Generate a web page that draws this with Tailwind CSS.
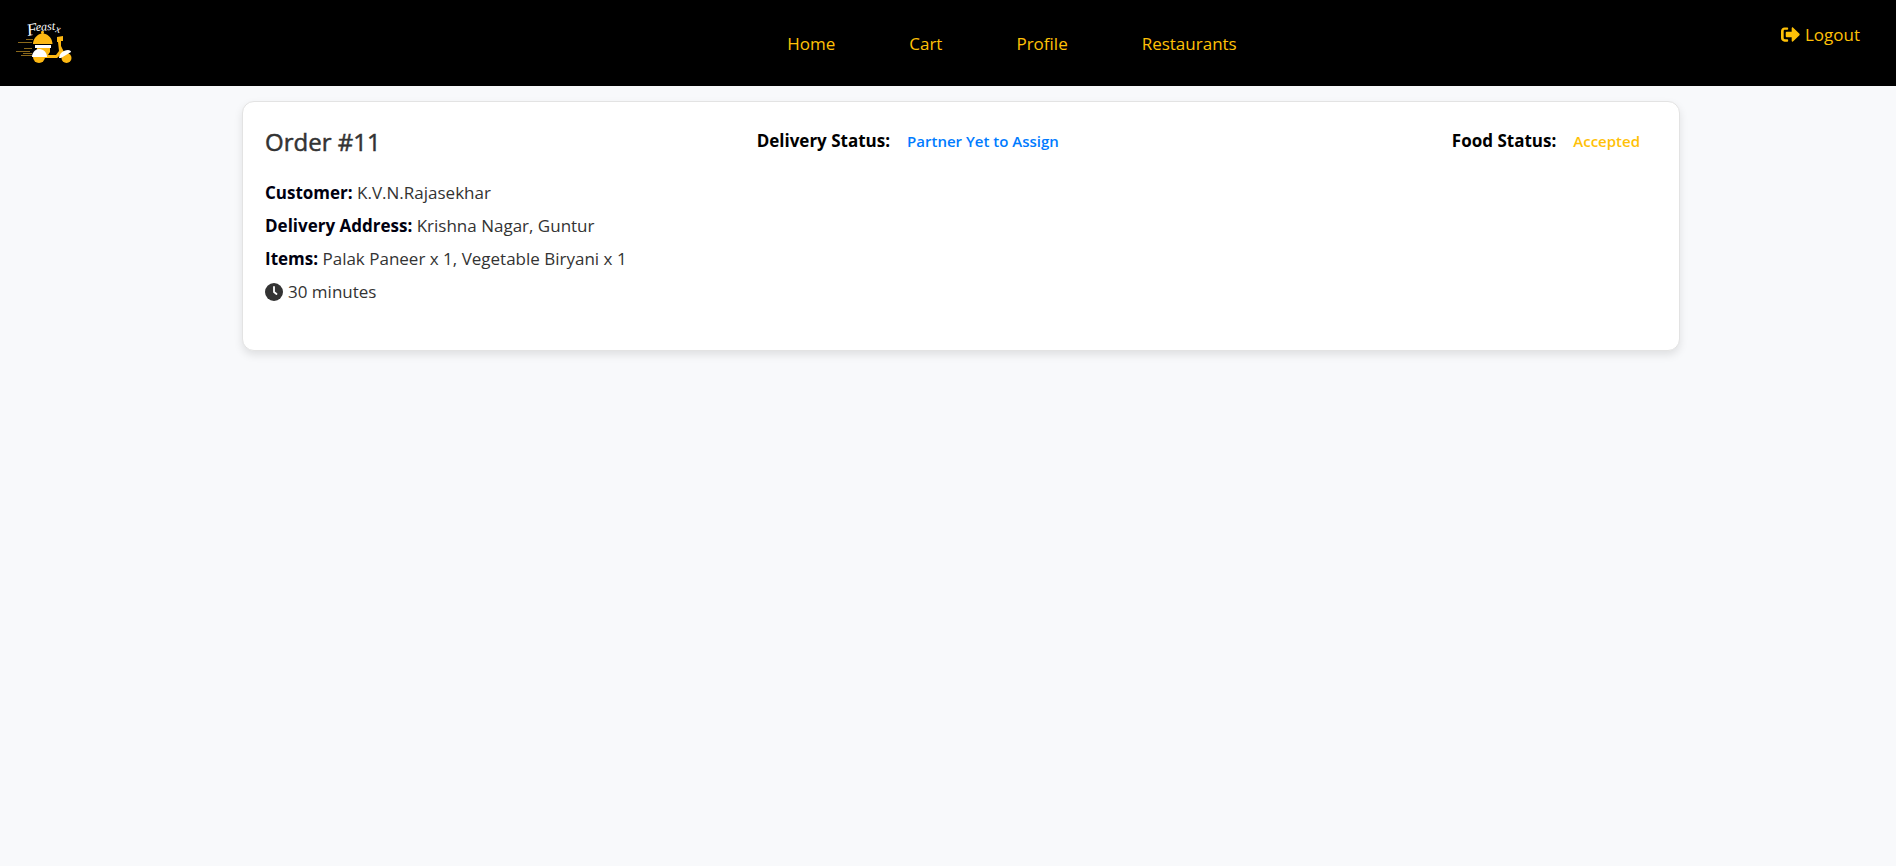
<!DOCTYPE html>
<html lang="en">
<head>
<meta charset="utf-8">
<title>Feastx - Orders</title>
<script src="https://cdn.jsdelivr.net/npm/@tailwindcss/browser@4"></script>
</head>
<body class="min-h-screen bg-[#f8f9fb] font-['Open_Sans','Noto_Sans',sans-serif] text-[17px] text-[#333]">
<header class="flex h-[86px] items-center justify-between bg-black pr-9 pl-4 text-[#ffc107]">
  <a href="#" aria-label="Feastx" class="w-20">
    <svg class="h-12 w-15" viewBox="16 19 60 48" fill="none">
      <g fill="#fff" font-family="'Liberation Serif',serif" font-style="italic">
        <text x="28" y="36" font-size="17" transform="rotate(-12 28 36)">F</text>
        <text x="36" y="31" font-size="12" transform="rotate(-4 36 31)">east</text>
        <text x="55" y="32" font-size="11" transform="rotate(12 55 32)">x</text>
      </g>
      <path d="M26 39.500h7M18 42.500h14M24 48.500h8M16 51.500h14M23 53.500h9M21 55.500h13" stroke="#8a681b"/>
      <path d="M33 44c0-5 4-9.500 8.500-10.500a1.500 1.500 0 1 1 2 0C49 34.500 52.500 39 52.500 44Z" fill="#fdb813"/>
      <path d="M35 45h16v3H35Z" fill="#fff"/>
      <path d="M37 48h13v4l-2 3H36ZM57 37l6-1v5h-2v5l3 6-7 6H44v-3h12l3-4-1-9h-1Z" fill="#fdb813"/>
      <circle cx="39" cy="57" r="6" fill="#fdb813"/>
      <path d="M32 57c0-4 3-8 7-8 5 0 8 4 8 8Z" fill="#fff"/>
      <circle cx="66.500" cy="58" r="5" fill="#fdb813"/>
      <path d="M59 58c0-4 4-8 9-8 2 0 3 1 3 2l-10 6Z" fill="#fff"/>
    </svg>
  </a>
  <nav class="ml-[147px] flex gap-[74px] pt-0.5">
    <a href="#">Home</a>
    <a href="#">Cart</a>
    <a href="#">Profile</a>
    <a href="#">Restaurants</a>
  </nav>
  <button type="button" class="flex items-center gap-[5px] self-start pt-[22px]">
    <svg class="size-[19px]" viewBox="0 0 512 512" fill="currentColor" aria-hidden="true"><path d="M497 273L329 441c-15 15-41 4.500-41-17v-96H152c-13.300 0-24-10.700-24-24v-96c0-13.300 10.700-24 24-24h136V88c0-21.400 25.900-32 41-17l168 168c9.300 9.400 9.300 24.600 0 34zM192 428v-24c0-11-9-20-20-20H104c-17.700 0-32-14.300-32-32V160c0-17.700 14.300-32 32-32h68c11 0 20-9 20-20V84c0-11-9-20-20-20H96C43 64 0 107 0 160v192c0 53 43 96 96 96h76c11 0 20-9 20-20z"/></svg>
    <span>Logout</span>
  </button>
</header>
<main class="pt-[15px] pr-[216px] pl-[242px]">
  <article class="rounded-xl border border-[#e3e3e3] bg-white px-[22px] pt-5 pb-[42px] shadow-[0_4px_8px_rgba(0,0,0,0.1)]">
    <div class="flex justify-between">
      <h2 class="text-[24px] leading-10 font-medium [-webkit-text-stroke:0.5px_#333]">Order #11</h2>
      <p class="leading-[38px] font-bold text-black">Delivery Status:<span class="px-[17px] text-[15px] font-semibold text-[#007bff]">Partner Yet to Assign</span></p>
      <p class="leading-[38px] font-bold text-black">Food Status:<span class="px-[17px] text-[15px] font-semibold text-[#ffc107]">Accepted</span></p>
    </div>
    <div class="mt-[14px] leading-[33px]">
      <p><strong class="text-[#000010]">Customer:</strong> K.V.N.Rajasekhar</p>
      <p><strong class="text-[#000010]">Delivery Address:</strong> Krishna Nagar, Guntur</p>
      <p><strong class="text-[#000010]">Items:</strong> Palak Paneer x 1, Vegetable Biryani x 1</p>
      <p class="flex items-center gap-[5px]">
        <svg class="size-[18px]" viewBox="0 0 18 18" aria-hidden="true"><circle cx="9" cy="9" r="9" fill="#333"/><path d="M9 4v5l2.500 2" fill="none" stroke="#fff" stroke-width="1.800" stroke-linecap="round" stroke-linejoin="round"/></svg>
        30 minutes
      </p>
    </div>
  </article>
</main>
</body>
</html>
